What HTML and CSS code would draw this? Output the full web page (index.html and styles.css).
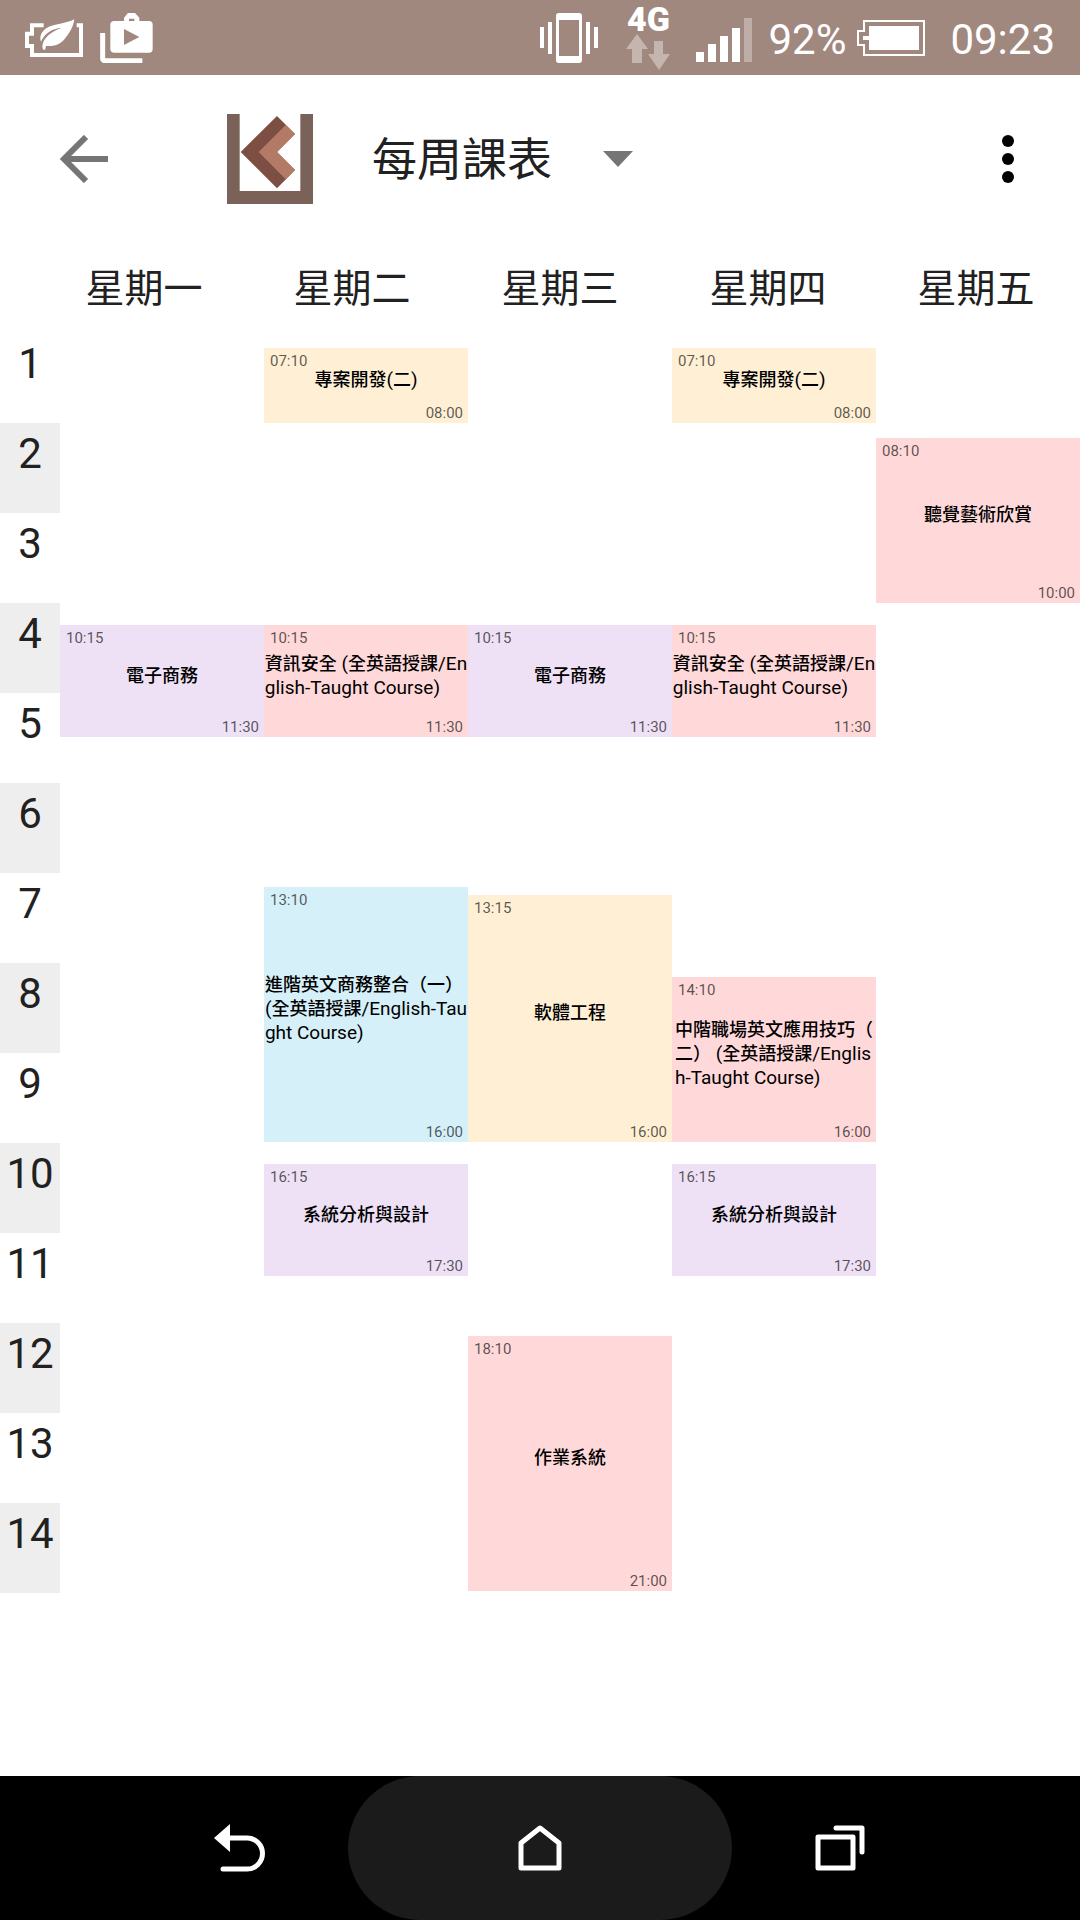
FILE: index.html
```html
<!DOCTYPE html>
<html lang="zh-Hant">
<head>
<meta charset="utf-8">
<meta name="viewport" content="width=device-width, initial-scale=1">
<title>每周課表</title>
<link rel="stylesheet" href="styles.css">
</head>
<body>
<div class="screen">

  <div class="status-bar">
    <div class="status-left">
      <svg width="58" height="38" viewBox="75 50 174 114" aria-hidden="true">
        <path d="M131 69H96V94H81V131H96V158H243V69H230" fill="none" stroke="#fff" stroke-width="12"/>
        <path d="M223 51C200 64 160 65 140 77C124 87 117 104 123 118C135 92 155 79 185 76C155 88 130 104 127 131Q127 138 130 143L136 141L138 131C160 133 180 127 194 110C208 92 220 75 223 51Z" fill="#fff"/>
      </svg>
      <svg width="53" height="50" viewBox="299 42 159 150" aria-hidden="true">
        <path d="M307 102V177Q307 185 315 185H426" fill="none" stroke="#fff" stroke-width="15"/>
        <path fill="#fff" fill-rule="evenodd" d="M342 66H371V56L383 42H404L417 56V66H446Q457 66 457 77V150Q457 161 446 161H342Q330 161 330 150V77Q330 66 342 66ZM386 59V66H402V59ZM371 90V138L417 114Z"/>
      </svg>
    </div>
    <div class="status-right">
      <svg class="vibrate" width="58" height="50" viewBox="0 0 58 50" fill="#fff" aria-hidden="true">
        <path fill-rule="evenodd" d="M19 0H39Q42 0 42 3V47Q42 50 39 50H19Q16 50 16 47V3Q16 0 19 0ZM19 7V43H39V7Z"/>
        <path d="M0 14H4V35H0ZM8 9H12V41H8ZM46 9H50V41H46ZM54 14H58V35H54Z"/>
      </svg>
      <div class="network">
        <span class="network-type">4G</span>
        <svg width="44" height="36" viewBox="0 0 44 36" fill="#c5b5af" aria-hidden="true">
          <path d="M11 0L22 15H16V29H6V15H0ZM28 7H37V20H44L33 36L22 20H28Z"/>
        </svg>
      </div>
      <svg class="signal" width="56" height="44" viewBox="0 0 56 44" fill="#fff" aria-hidden="true">
        <path d="M0 34H8V44H0ZM12 26H20V44H12ZM24 18H32V44H24ZM36 10H44V44H36Z"/>
        <path d="M48 0H56V44H48Z" fill="#bfaea8"/>
      </svg>
      <span class="battery-level">92%</span>
      <svg class="battery" width="68" height="36" viewBox="0 0 68 36" aria-hidden="true">
        <path d="M7 1H67V35H7V25H1V11H7Z" fill="none" stroke="#fff" stroke-width="2"/>
        <path d="M12 6H62V30H12V20H6V16H12Z" fill="#fff"/>
      </svg>
      <time class="clock">09:23</time>
    </div>
  </div>

  <header class="app-bar">
    <button class="icon-button back" type="button" aria-label="返回">
      <svg width="48" height="48" viewBox="0 0 48 48" fill="none" stroke="#757575" stroke-width="6" aria-hidden="true">
        <path d="M26 2L4 24L26 46M4 24H48"/>
      </svg>
    </button>
    <svg class="logo" width="86" height="90" viewBox="681 342 258 270" aria-hidden="true">
      <path d="M681 342H719V573H901V342H939V612H681Z" fill="#7b6259"/>
      <path d="M831 348L885 402L831 456L885 510L831 565L722 456Z" fill="#7d4e42"/>
      <path d="M857 375L885 402L831 456L885 510L857 538L776 456Z" fill="#b37a66"/>
    </svg>
    <div class="view-picker">
      <select class="view-select" aria-label="檢視">
        <option>每周課表</option>
      </select>
      <svg class="view-arrow" width="30" height="16" viewBox="0 0 30 16" fill="#757575" aria-hidden="true"><path d="M0 0H30L15 16Z"/></svg>
    </div>
    <button class="icon-button more" type="button" aria-label="更多">
      <svg width="12" height="48" viewBox="0 0 12 48" aria-hidden="true">
        <circle cx="6" cy="6" r="6"/><circle cx="6" cy="24" r="6"/><circle cx="6" cy="42" r="6"/>
      </svg>
    </button>
  </header>

  <main class="timetable">
    <div class="weekdays">
      <h2>星期一</h2><h2>星期二</h2><h2>星期三</h2><h2>星期四</h2><h2>星期五</h2>
    </div>
    <div class="week">
      <ol class="periods">
        <li>1</li><li>2</li><li>3</li><li>4</li><li>5</li><li>6</li><li>7</li>
        <li>8</li><li>9</li><li>10</li><li>11</li><li>12</li><li>13</li><li>14</li>
      </ol>

      <section class="day">
        <article class="course purple" style="grid-row: 40 / 55">
          <time class="start">10:15</time><h3>電子商務</h3><time class="end">11:30</time>
        </article>
      </section>

      <section class="day">
        <article class="course cream" style="grid-row: 3 / 13">
          <time class="start">07:10</time><h3>專案開發<span lang="en">(</span>二<span lang="en">)</span></h3><time class="end">08:00</time>
        </article>
        <article class="course pink" style="grid-row: 40 / 55">
          <time class="start">10:15</time><h3>資訊安全<span lang="en"> (</span>全英語授課<span lang="en">/En<br>glish-Taught Course)</span></h3><time class="end">11:30</time>
        </article>
        <article class="course blue" style="grid-row: 75 / 109">
          <time class="start">13:10</time><h3>進階英文商務整合（一）<br><span lang="en">(</span>全英語授課<span lang="en">/English-Tau<br>ght Course)</span></h3><time class="end">16:00</time>
        </article>
        <article class="course purple" style="grid-row: 112 / 127">
          <time class="start">16:15</time><h3>系統分析與設計</h3><time class="end">17:30</time>
        </article>
      </section>

      <section class="day">
        <article class="course purple" style="grid-row: 40 / 55">
          <time class="start">10:15</time><h3>電子商務</h3><time class="end">11:30</time>
        </article>
        <article class="course cream" style="grid-row: 76 / 109">
          <time class="start">13:15</time><h3>軟體工程</h3><time class="end">16:00</time>
        </article>
        <article class="course pink" style="grid-row: 135 / 169">
          <time class="start">18:10</time><h3>作業系統</h3><time class="end">21:00</time>
        </article>
      </section>

      <section class="day">
        <article class="course cream" style="grid-row: 3 / 13">
          <time class="start">07:10</time><h3>專案開發<span lang="en">(</span>二<span lang="en">)</span></h3><time class="end">08:00</time>
        </article>
        <article class="course pink" style="grid-row: 40 / 55">
          <time class="start">10:15</time><h3>資訊安全<span lang="en"> (</span>全英語授課<span lang="en">/En<br>glish-Taught Course)</span></h3><time class="end">11:30</time>
        </article>
        <article class="course pink" style="grid-row: 87 / 109">
          <time class="start">14:10</time><h3>中階職場英文應用技巧（<br>二）<span lang="en"> (</span>全英語授課<span lang="en">/Englis<br>h-Taught Course)</span></h3><time class="end">16:00</time>
        </article>
        <article class="course purple" style="grid-row: 112 / 127">
          <time class="start">16:15</time><h3>系統分析與設計</h3><time class="end">17:30</time>
        </article>
      </section>

      <section class="day">
        <article class="course pink" style="grid-row: 15 / 37">
          <time class="start">08:10</time><h3>聽覺藝術欣賞</h3><time class="end">10:00</time>
        </article>
      </section>
    </div>
  </main>

  <nav class="nav-bar">
    <button type="button" aria-label="返回">
      <svg width="52" height="48" viewBox="0 0 52 48" aria-hidden="true">
        <path d="M0 14L16 0V28Z" fill="#fff"/>
        <path d="M14 14H33A15.500 15.500 0 0 1 33 45H9" fill="none" stroke="#fff" stroke-width="5" stroke-linecap="round"/>
      </svg>
    </button>
    <button class="home" type="button" aria-label="主畫面">
      <svg width="44" height="46" viewBox="0 0 44 46" fill="none" stroke="#fff" stroke-width="5" stroke-linejoin="round" aria-hidden="true">
        <path d="M22 3L41 18V43H3V18Z"/>
      </svg>
    </button>
    <button type="button" aria-label="最近使用">
      <svg width="50" height="46" viewBox="0 0 50 46" fill="none" stroke="#fff" stroke-width="5" stroke-linejoin="round" stroke-linecap="round" aria-hidden="true">
        <path d="M3 12H38V43H3ZM21 3H47V27"/>
      </svg>
    </button>
  </nav>
</div>
</body>
</html>
```

FILE: styles.css
```css
* {
  box-sizing: border-box;
}

body,
h2,
h3,
ol {
  margin: 0;
  padding: 0;
}

body {
  background: #fff;
  color: #212121;
  font-family: Roboto, "Noto Sans CJK TC", sans-serif;
}

svg {
  display: block;
  flex: none;
}

button {
  display: flex;
  align-items: center;
  justify-content: center;
  padding: 0;
  border: 0;
  background: none;
}

.screen {
  display: flex;
  flex-direction: column;
  min-height: 100vh;
}

/* System status bar */
.status-bar {
  display: flex;
  justify-content: space-between;
  height: 75px;
  padding: 0 25px;
  background: #a1887f;
  color: #fff;
}

.status-left,
.status-right {
  display: flex;
  align-items: center;
}

.status-left {
  gap: 17px;
}

.vibrate {
  margin-right: 28px;
}

.network {
  display: flex;
  flex-direction: column;
  align-items: center;
  gap: 2px;
  margin-right: 26px;
}

.network-type {
  font-size: 34px;
  font-weight: 900;
  line-height: 26px;
}

.signal {
  margin: 4px 16px 0 0;
}

.battery-level,
.clock {
  margin-top: 4px;
  font-size: 42px;
  line-height: 48px;
}

.battery {
  margin: 0 25px 0 11px;
}

/* App bar */
.app-bar {
  display: flex;
  align-items: center;
  height: 168px;
  padding: 0 36px;
}

.icon-button {
  height: 96px;
}

.back {
  width: 96px;
}

.logo {
  margin-left: 95px;
}

.view-picker {
  display: grid;
  align-items: center;
  margin-left: 59px;
}

.view-select,
.view-arrow {
  grid-area: 1 / 1;
}

.view-select {
  appearance: none;
  width: 261px;
  padding: 4px 0 0;
  border: 0;
  background: none;
  color: inherit;
  font: inherit;
  font-size: 45px;
  line-height: 66px;
}

.view-arrow {
  justify-self: end;
  pointer-events: none;
}

.more {
  width: 72px;
  margin-left: auto;
}

/* Timetable */
.timetable {
  flex: 1;
}

.weekdays {
  display: grid;
  grid-template-columns: repeat(5, 1fr);
  padding: 2px 0 0 40px;
}

.weekdays h2 {
  font-size: 39px;
  font-weight: 400;
  line-height: 88px;
  text-align: center;
}

.week {
  display: grid;
  grid-template-columns: 60px repeat(5, minmax(0, 1fr));
}

.periods {
  list-style: none;
}

.periods li {
  height: 90px;
  padding-top: 7px;
  font-size: 42px;
  line-height: 48px;
  text-align: center;
}

.periods li:nth-child(even) {
  background: #eee;
}

/* One grid row stands for five minutes, starting at 07:00 */
.day {
  display: grid;
  grid-template-rows: repeat(168, minmax(0, 1fr));
  padding-bottom: 2px;
}

/* The time span alone decides the height, not the text inside */
.course {
  display: flex;
  flex-direction: column;
  height: 0;
  min-height: 100%;
}

.course time {
  padding: 6px 6px 0;
  color: rgba(0, 0, 0, 0.65);
  font-size: 15px;
  line-height: 14px;
}

.course .end {
  padding: 14px 5px 3px;
  text-align: right;
}

.course h3 {
  width: max-content;
  margin: auto;
  color: #000;
  font-size: 18px;
  font-weight: 500;
  line-height: 24px;
  white-space: pre;
}

.course h3 span {
  font-size: 19px;
  font-weight: 400;
}

.cream {
  background: #fff0d5;
}

.pink {
  background: #ffd9da;
}

.purple {
  background: #eee0f5;
}

.blue {
  background: #d6f0f9;
}

/* System navigation bar */
.nav-bar {
  display: grid;
  grid-template-columns: 9fr 16fr 9fr;
  height: 144px;
  padding: 0 132px;
  background: #000;
}

.nav-bar .home {
  border-radius: 72px;
  background: #1b1b1b;
}
```
